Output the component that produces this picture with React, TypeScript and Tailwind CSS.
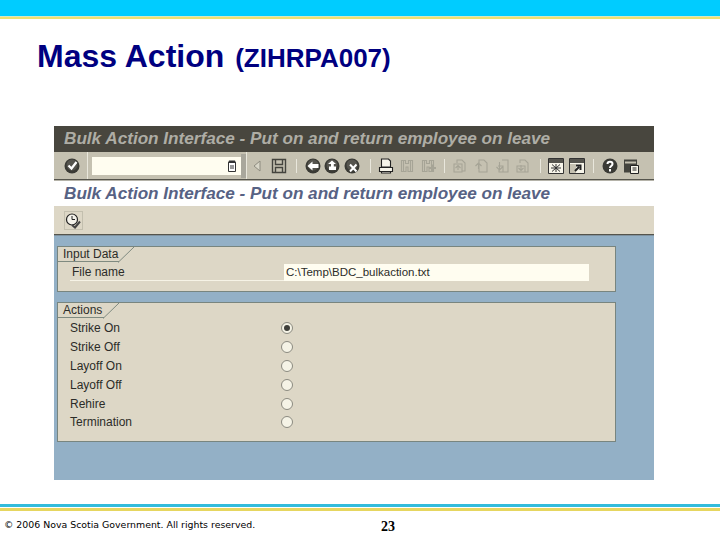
import React from "react";

const Sep = ({ className }: { className: string }) => <div className={`w-px h-[14px] bg-[#e9e7dc] shrink-0 ${className}`} />;

function Icon({ children, w = 16, className = "" }: { children: React.ReactNode; w?: number; className?: string }) {
  return (
    <svg width={w} height="16" viewBox={`0 0 ${w} 16`} className={`shrink-0 ${className}`}>
      {children}
    </svg>
  );
}

const Dark = ({ kind, className }: { kind: "check" | "back" | "up" | "x"; className: string }) => (
  <Icon className={className}>
    <circle cx="8" cy="8" r="7.500" fill="#3a3a35" />
    <circle cx="8" cy="7" r="5.500" fill="#55544e" />
    {kind === "check" && <path d="M4.500 7.500l3 3 5-6.500" stroke="#fff" strokeWidth="2.200" fill="none" />}
    {kind === "back" && <path d="M2.500 8l5-4.500V6h6v4h-6v2.500z" fill="#fff" />}
    {kind === "up" && <path d="M8 2.500L12 6H9.800v2.500H12V12H5V8.500h2V6H4z" fill="#fff" />}
    {kind === "x" && <path d="M6 6.500l6.500 7M12.500 6.500l-6.500 7" stroke="#fff" strokeWidth="2" />}
  </Icon>
);

const Binoc = ({ plus, className }: { plus?: boolean; className: string }) => (
  <Icon className={className}>
    <path d="M2.500 2.500h4v3h3v-3h4v11h-4.500V9H7v4.500H2.500zM4.500 2.500v11M11.500 2.500v11" fill="none" stroke="#a6a496" strokeWidth="1.100" />
    {plus && <path d="M12.500 6.500v7M9 10h7" stroke="#a6a496" strokeWidth="1.800" />}
  </Icon>
);

const Page = ({ d, className }: { d: string; className: string }) => (
  <Icon className={className}>
    <path d={d} fill="none" stroke="#a6a496" strokeWidth="1.100" />
  </Icon>
);

function Row({ label, checked }: { label: string; checked?: boolean }) {
  return (
    <div className="flex items-center h-[18.800px] pl-[12px]">
      <span className="w-[211px] text-[12px] text-[#2c2c28]">{label}</span>
      <span className="w-[12px] h-[12px] rounded-full border border-[#8b8a80] bg-[#f5f3e6] flex items-center justify-center">
        {checked && <span className="w-[6px] h-[6px] rounded-full bg-[#3f3f3a]" />}
      </span>
    </div>
  );
}

const GroupTitle = ({ text, w }: { text: string; w: string }) => (
  <div className={`relative h-[15px] ${w} border-b border-[#7f8a80] pl-[5px] text-[12px] leading-[14px] text-[#2c2c28] whitespace-nowrap`}>
    {text}
    <svg width="18" height="16" viewBox="0 0 18 16" className="absolute right-[-17px] top-0">
      <path d="M0 15.500L16 0" stroke="#7f8a80" fill="none" />
    </svg>
  </div>
);

const Heading = "Bulk Action Interface - Put on and return employee on leave";

export default function App() {
  const actions = ["Strike On", "Strike Off", "Layoff On", "Layoff Off", "Rehire", "Termination"];
  return (
    <div className="w-[720px] h-[540px] bg-white flex flex-col overflow-hidden font-['Liberation_Sans',sans-serif]">
      <div className="h-[16px] bg-[#00ccff] shrink-0" />
      <div className="h-px bg-[#d8e8c0] shrink-0" />
      <div className="h-[2px] bg-[#f0e070] shrink-0" />

      <h1 className="h-[107px] pl-[37px] pt-[17px] font-bold text-[#000080] text-[32px] leading-[40px] shrink-0 whitespace-nowrap">
        Mass Action <span className="text-[26px] ml-[2px]">(ZIHRPA007)</span>
      </h1>

      <div className="ml-[54px] w-[600px] h-[354px] flex flex-col bg-[#93b0c6] shrink-0">
        <div className="h-[26px] bg-[#48463e] flex items-center pl-[10px] text-[#aeada5] italic font-bold text-[17.150px] shrink-0 whitespace-nowrap">
          {Heading}
        </div>

        <div className="h-[27px] bg-[#c5c1b1] flex items-center pl-[10px] shrink-0">
          <Dark kind="check" className="" />
          <Sep className="ml-[7px] h-[27px] bg-[#8f8d82]" />
          <div className="ml-[4px] w-[149px] h-[18px] bg-[#fffdf0] flex items-center justify-end pr-[4px] shrink-0">
            <svg width="10" height="12" viewBox="0 0 10 12">
              <path d="M1.500 2.500h7v9h-7z" fill="#fff" stroke="#333" />
              <path d="M2 0.500h6L9 3H1z" fill="#333" />
              <path d="M3 6h4M3 8h4" stroke="#333" />
            </svg>
          </div>
          <div className="w-[5px] h-[24px] bg-[#a9a79c] shrink-0" />
          <Sep className="h-[27px]" />
          <Icon w={12} className="ml-[4px]">
            <path d="M9 3v10L3 8z" fill="#d8d6c8" stroke="#8e8c80" />
          </Icon>
          <Icon className="ml-[8px]">
            <path d="M1.500 1.500h13v13h-13zM4.500 1.500v5h7v-5M4.500 14.500v-5h7v5" fill="#c5c1b1" stroke="#44443e" strokeWidth="1.400" />
          </Icon>
          <Sep className="ml-[9px]" />
          <Dark kind="back" className="ml-[8px]" />
          <Dark kind="up" className="ml-[3px]" />
          <Dark kind="x" className="ml-[4px]" />
          <Sep className="ml-[10px]" />
          <Icon className="ml-[7px]">
            <path d="M3.500 1h7l2 2v6h-9zM1.500 9.500h13v4h-13zM3.500 13.500v1.500h9v-1.500" fill="#f7f5ea" stroke="#222" strokeWidth="1.100" />
          </Icon>
          <Binoc className="ml-[5px]" />
          <Binoc plus className="ml-[5px]" />
          <Sep className="ml-[8px]" />
          <Page className="ml-[7px]" d="M5 5V2h5l3 3v8h-3M2 6h8v8H2zM3.500 10l2.500-2.500L8.500 10M6 7.500V12" />
          <Page className="ml-[6px]" d="M5 7V2h5l3 3v9H5zM1.500 8L4.500 5l3 3M4.500 5v6" />
          <Page className="ml-[5px]" d="M7 2h6v12H4v-3M3 8h5v6M1.500 9l3 3 3-3M4.500 4v8" />
          <Page className="ml-[4px]" d="M5 5V2h5l3 3v9H6M2 8h8v6H2zM3.500 10L6 12.500 8.500 10M6 7v5" />
          <Sep className="ml-[9px]" />
          <Icon className="ml-[7px]">
            <path d="M.500.500h15v15H.500z" fill="#f7f5ea" stroke="#333" />
            <path d="M1 1h14v4H1z" fill="#55544e" />
            <path d="M4 6.500l8 7M12 6.500l-8 7M8 6v8M3 10h10" stroke="#333" />
          </Icon>
          <Icon className="ml-[5px]">
            <path d="M.500.500h15v15H.500z" fill="#f7f5ea" stroke="#333" />
            <path d="M1 1h14v4H1z" fill="#55544e" />
            <path d="M1 6h6v9H1z" fill="#c5c1b1" />
            <path d="M6 13l4-4M7 7.500h4.500V12" stroke="#222" strokeWidth="2" fill="none" />
          </Icon>
          <Sep className="ml-[8px]" />
          <Icon className="ml-[8px]">
            <circle cx="8" cy="8" r="7.500" fill="#3a3a35" />
            <path d="M5.500 6c0-3 5-3 5 0 0 2-2.500 2-2.500 4" stroke="#fff" strokeWidth="2" fill="none" />
            <path d="M7 11h2v2.500H7z" fill="#fff" />
          </Icon>
          <Icon className="ml-[5px]">
            <path d="M1 1.500h13v13H1z" fill="#44443e" />
            <path d="M2 3.500h11v2H2z" fill="#c5c1b1" />
            <path d="M7.500 7.500h8v8h-8z" fill="#f7f5ea" stroke="#222" />
            <path d="M9.500 10h4M9.500 12h4" stroke="#222" />
          </Icon>
        </div>
        <div className="h-px bg-[#55544c] shrink-0" />
        <div className="h-px bg-[#b5b3a9] shrink-0" />

        <div className="h-[26px] bg-white border-b border-[#dcd6c6] flex items-center pl-[10px] text-[#576284] italic font-bold text-[17.150px] shrink-0 whitespace-nowrap">
          {Heading}
        </div>

        <div className="h-[27px] bg-[#ddd7c6] flex items-center pl-[10px] shrink-0">
          <div className="w-[19px] h-[19px] border border-[#c3bfae] flex items-center justify-center">
            <svg width="17" height="16" viewBox="0 0 17 16">
              <circle cx="7" cy="6.500" r="5.500" fill="#f4f2ea" stroke="#222" strokeWidth="1.200" />
              <path d="M7 3v3.500h3" stroke="#222" fill="none" />
              <path d="M7 12l3 2.500 5-6" stroke="#444" strokeWidth="2" fill="none" />
            </svg>
          </div>
        </div>
        <div className="h-px bg-[#55544c] shrink-0" />
        <div className="h-px bg-[#7f929f] shrink-0" />

        <section className="ml-[3px] mt-[10px] w-[559px] h-[46px] bg-[#ddd7c6] border border-[#78857f] shrink-0">
          <GroupTitle text="Input Data" w="w-[61px]" />
          <div className="flex items-center h-[17px] mt-[2px] ml-[12px]">
            <span className="w-[214px] h-[17px] pl-[2px] text-[12px] leading-[17px] text-[#2c2c28] border-b border-[#f6f3e6]">File name</span>
            <span className="w-[305px] h-[17px] bg-[#fffdf0] pl-[2px] text-[11.500px] leading-[17px] text-[#2c2c28]">C:\Temp\BDC_bulkaction.txt</span>
          </div>
        </section>

        <section className="ml-[3px] mt-[10px] w-[559px] h-[140px] bg-[#ddd7c6] border border-[#78857f] shrink-0">
          <GroupTitle text="Actions" w="w-[46px]" />
          <div className="mt-[1px]">
            {actions.map((a, i) => (
              <Row key={a} label={a} checked={i === 0} />
            ))}
          </div>
        </section>
      </div>

      <div className="mt-[24px] h-[3px] bg-[#33bcdc] shrink-0" />
      <div className="h-px bg-white shrink-0" />
      <div className="h-[3px] bg-[#e6d660] shrink-0" />
      <div className="flex items-center h-[23px] mt-[3px] shrink-0">
        <span className="w-[381px] pl-[4px] text-[9.400px] text-black font-['DejaVu_Sans',sans-serif] whitespace-nowrap">
          © 2006 Nova Scotia Government. All rights reserved.
        </span>
        <span className="text-[14px] font-bold text-black font-['Liberation_Serif',serif] pt-[2px]">23</span>
      </div>
    </div>
  );
}
